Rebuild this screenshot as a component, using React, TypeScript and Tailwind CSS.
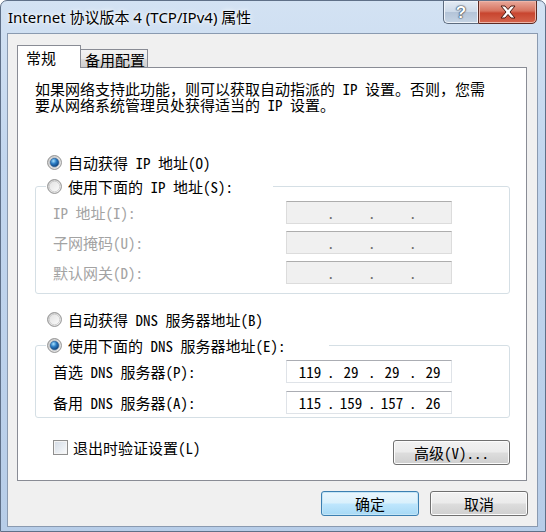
import { Fragment } from "react";

const Radio = ({ checked }: { checked?: boolean }) => (
    <svg width="15" height="15" viewBox="0 0 15 15" className="shrink-0">
        <defs>
            <linearGradient id="rbOuter" x1="0" y1="0" x2="1" y2="1">
                <stop offset="0" stopColor="#cfcfcf" />
                <stop offset="1" stopColor="#ffffff" />
            </linearGradient>
            <linearGradient id="rbInner" x1="0" y1="0" x2="1" y2="1">
                <stop offset="0" stopColor="#e2e2e2" />
                <stop offset="1" stopColor="#fbfbfb" />
            </linearGradient>
            <radialGradient id="rbDot" cx="0.38" cy="0.32" r="0.75">
                <stop offset="0" stopColor="#a8e2ff" />
                <stop offset="0.45" stopColor="#2b7cc4" />
                <stop offset="1" stopColor="#0c3a70" />
            </radialGradient>
        </defs>
        <circle cx="7.5" cy="7.5" r="6.9" fill="url(#rbOuter)" stroke="#8c8c8c" />
        <circle cx="7.5" cy="7.5" r="5.3" fill="url(#rbInner)" stroke="#c6c6c6" strokeWidth="0.8" />
        {checked && <circle cx="7.5" cy="7.5" r="4.3" fill="url(#rbDot)" stroke="#1b4f86" strokeWidth="0.6" />}
    </svg>
);

const IpBox = ({ parts, disabled }: { parts: string[]; disabled?: boolean }) => (
    <div
        className={
            disabled
                ? "w-[166px] h-[23px] flex items-center pl-[6px] border border-[#dcdcdc] border-t-[#adadad] bg-[#f0f0f0] text-[#6d6d6d]"
                : "w-[166px] h-[23px] flex items-center pl-[6px] border border-[#dfe3e8] border-t-[#abadb3] bg-white text-black"
        }
    >
        {parts.map((p, i) => (
            <Fragment key={i}>
                <span className="w-[34px] text-center">{p}</span>
                {i < 3 && <span className="w-[7px] text-center">.</span>}
            </Fragment>
        ))}
    </div>
);

const Row = ({ label, parts, disabled }: { label: string; parts: string[]; disabled?: boolean }) => (
    <div className="flex items-center h-[23px] pl-[17px]">
        <span className={disabled ? "w-[233px] text-[#a3a3a3]" : "w-[233px]"}>{label}</span>
        <IpBox parts={parts} disabled={disabled} />
    </div>
);

const Button = ({ children, primary, className }: { children: React.ReactNode; primary?: boolean; className?: string }) => (
    <button
        className={
            (primary
                ? "border-[#3c7fb1] bg-[linear-gradient(180deg,#eaf6fd_0%,#d9f0fc_48%,#bee6fd_52%,#a7d9f5_100%)] shadow-[inset_0_0_0_1px_#c4e5f6]"
                : "border-[#707070] bg-[linear-gradient(180deg,#f2f2f2_0%,#ebebeb_48%,#dddddd_52%,#cfcfcf_100%)] shadow-[inset_0_0_0_1px_#fcfcfc]") +
            " h-[25px] border rounded-[3px] flex items-center justify-center " +
            (className ?? "")
        }
    >
        {children}
    </button>
);

const App = () => {
    return (
        <div className="w-[546px] h-[532px] overflow-hidden rounded-t-[7px] border border-[#5f7088] bg-[linear-gradient(180deg,#d3e2f3_0%,#c2d6ee_30%,#b7cde8_100%)] flex flex-col">
            {/* title bar */}
            <div className="h-[32px] flex items-start justify-between">
                <div className="pl-[7px] pt-[6px] font-['Noto_Sans','Noto_Sans_CJK_SC',sans-serif] text-[15px] leading-[20px] text-black [text-shadow:0_0_6px_#ffffff,0_0_3px_#ffffff]">
                    Internet 协议版本 4 (TCP/IPv4) 属性
                </div>
                <div className="flex mr-[8px] -mt-[1px]">
                    <div className="w-[35px] h-[24px] rounded-bl-[5px] border border-[#5d6b7e] border-r-0 bg-[linear-gradient(180deg,#e4ebf4_0%,#ccd9e8_50%,#b4c4d8_52%,#c6d4e4_100%)] flex items-center justify-center shadow-[inset_0_0_0_1px_#eef3f9]">
                        <span className="font-['Liberation_Sans',sans-serif] font-bold text-[17px] leading-none text-white [text-shadow:0_0_1px_#2d3a4a,0_0_1px_#2d3a4a,0_0_2px_#2d3a4a]">?</span>
                    </div>
                    <div className="w-[59px] h-[24px] rounded-br-[5px] border border-[#5d2a22] bg-[linear-gradient(180deg,#e9a99b_0%,#d7735f_45%,#c8452f_55%,#d5644c_100%)] flex items-center justify-center shadow-[inset_0_0_0_1px_#eeb5a8]">
                        <svg width="18" height="14" viewBox="0 0 18 14">
                            <path d="M2 1h4l3 3.5L12 1h4l-5 6 5 6h-4l-3-3.5L6 13H2l5-6z" fill="#ffffff" stroke="#4a1a12" strokeWidth="1" strokeLinejoin="round" />
                        </svg>
                    </div>
                </div>
            </div>

            {/* client area */}
            <div className="ml-[6px] w-[531px] h-[494px] border border-[#8a9ab0] bg-[#f0f0f0] font-['Noto_Sans_Mono_CJK_SC','Noto_Sans_CJK_SC',monospace] text-[15px] leading-[15px] text-black">
                {/* tabs */}
                <div className="mt-[11px] ml-[9px] flex items-end h-[22px]">
                    <div className="relative z-10 w-[64px] h-[23px] -mb-[1px] border border-b-0 border-[#898c95] bg-white pl-[8px] pt-[4px]">常规</div>
                    <div className="w-[67px] h-[18px] border border-l-0 border-b-0 border-[#898c95] bg-[linear-gradient(180deg,#f3f3f3_0%,#ebebeb_50%,#dddddd_51%,#cfcfcf_100%)] pl-[4px] pt-[2px]">备用配置</div>
                </div>

                {/* panel */}
                <div className="ml-[9px] w-[510px] h-[414px] border border-[#898c95] bg-white flex flex-col">
                    <p className="mt-[13px] pl-[17px] whitespace-nowrap leading-[16px]">
                        如果网络支持此功能，则可以获取自动指派的 IP 设置。否则，您需
                        <br />
                        要从网络系统管理员处获得适当的 IP 设置。
                    </p>

                    <div className="mt-[39px] h-[20px] pl-[29px] flex items-center gap-[6px]">
                        <Radio checked />
                        <span>自动获得 IP 地址(O)</span>
                    </div>

                    <div className="mt-[14px] ml-[17px] w-[475px] border border-[#d5dfe5] rounded-[3px] pb-[9px] flex flex-col">
                        <div className="-mt-[11px] ml-[10px] w-[227px] h-[20px] bg-white pl-[1px] flex items-center gap-[6px]">
                            <Radio />
                            <span>使用下面的 IP 地址(S):</span>
                        </div>
                        <div className="mt-[5px] flex flex-col gap-[7px]">
                            <Row label="IP 地址(I):" parts={["", "", "", ""]} disabled />
                            <Row label="子网掩码(U):" parts={["", "", "", ""]} disabled />
                            <Row label="默认网关(D):" parts={["", "", "", ""]} disabled />
                        </div>
                    </div>

                    <div className="mt-[15px] h-[20px] pl-[29px] flex items-center gap-[6px]">
                        <Radio />
                        <span>自动获得 DNS 服务器地址(B)</span>
                    </div>

                    <div className="mt-[16px] ml-[17px] w-[475px] border border-[#d5dfe5] rounded-[3px] pb-[3px] flex flex-col">
                        <div className="-mt-[11px] ml-[10px] w-[283px] h-[20px] bg-white pl-[1px] flex items-center gap-[6px]">
                            <Radio checked />
                            <span>使用下面的 DNS 服务器地址(E):</span>
                        </div>
                        <div className="mt-[5px] flex flex-col gap-[8px]">
                            <Row label="首选 DNS 服务器(P):" parts={["119", "29", "29", "29"]} />
                            <Row label="备用 DNS 服务器(A):" parts={["115", "159", "157", "26"]} />
                        </div>
                    </div>

                    <div className="mt-[21px] pl-[35px] pr-[16px] flex items-start justify-between">
                        <div className="h-[16px] flex items-center gap-[5px]">
                            <span className="w-[15px] h-[15px] shrink-0 border border-[#8f8f8f] bg-[linear-gradient(135deg,#d3dbe5_0%,#eaeef3_60%,#fbfbfb_100%)] shadow-[inset_0_0_0_1px_#f4f4f4]" />
                            <span>退出时验证设置(L)</span>
                        </div>
                        <Button className="mt-[1px] w-[117px]">高级(V)...</Button>
                    </div>
                </div>

                {/* dialog buttons */}
                <div className="mt-[10px] pr-[9px] flex justify-end gap-[11px]">
                    <Button primary className="w-[98px]">确定</Button>
                    <Button className="w-[98px]">取消</Button>
                </div>
            </div>
        </div>
    );
};

export default App;
